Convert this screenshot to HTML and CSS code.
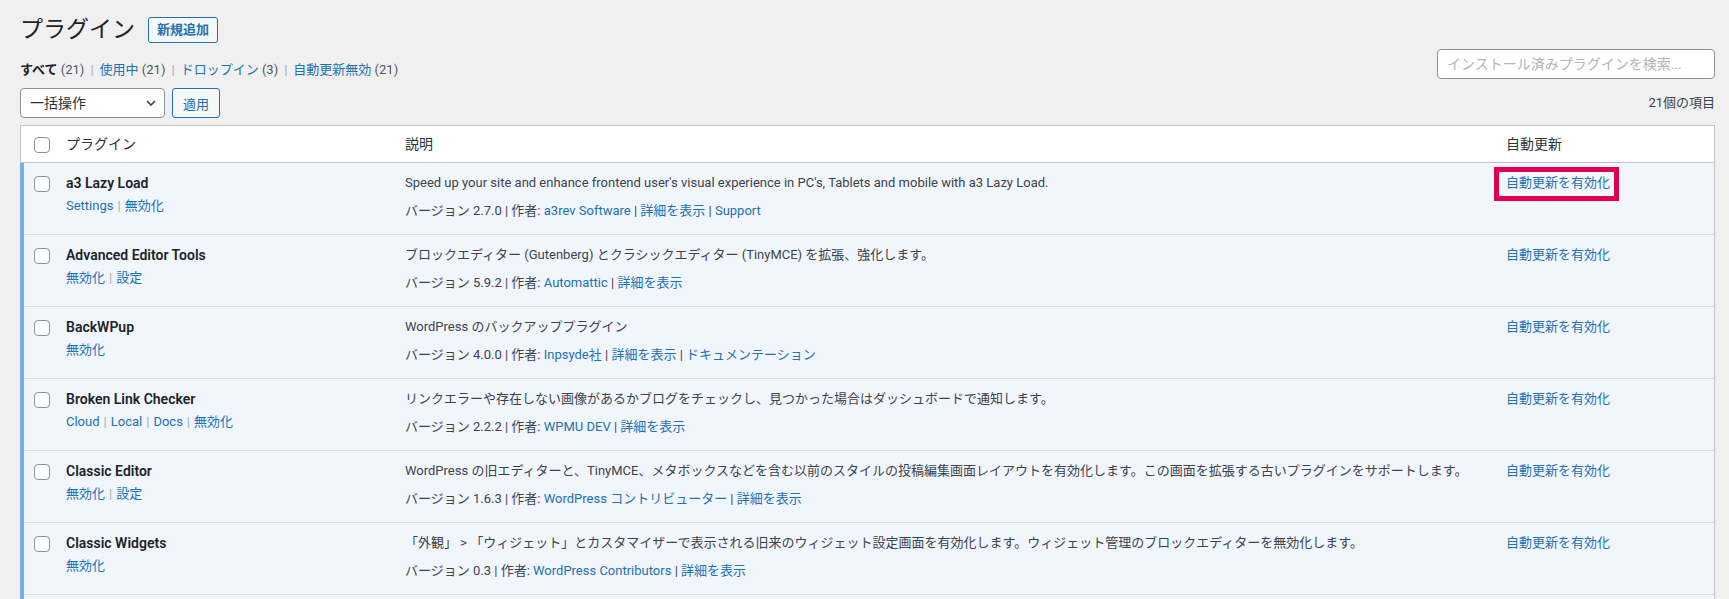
FILE: index.html
```html
<!DOCTYPE html>
<html lang="ja">
<head>
<meta charset="utf-8">
<title>プラグイン</title>
<link rel="stylesheet" href="styles.css">
</head>
<body>
<div class="wrap">
  <div class="title-row">
    <h1>プラグイン</h1>
    <a class="btn-add" href="#">新規追加</a>
  </div>

  <div class="filter-row">
    <ul class="subsubsub">
      <li><span class="current">すべて</span> <span class="count">(21)</span><span class="sep">|</span></li>
      <li><a href="#">使用中</a> <span class="count">(21)</span><span class="sep">|</span></li>
      <li><a href="#">ドロップイン</a> <span class="count">(3)</span><span class="sep">|</span></li>
      <li><a href="#">自動更新無効</a> <span class="count">(21)</span></li>
    </ul>
    <input class="search" type="search" placeholder="インストール済みプラグインを検索...">
  </div>

  <div class="tablenav">
    <div class="bulk">
      <div class="select">
        <span>一括操作</span>
        <svg class="chev" width="10" height="6" viewBox="0 0 10 6"><path d="M1 1l4 4 4-4" fill="none" stroke="#3c434a" stroke-width="1.6"/></svg>
      </div>
      <button class="btn">適用</button>
    </div>
    <div class="items">21個の項目</div>
  </div>

  <table class="plugins">
    <colgroup>
      <col class="c-check"><col class="c-name"><col class="c-desc"><col class="c-auto">
    </colgroup>
    <thead>
      <tr>
        <th class="check"><span class="cb"></span></th>
        <th>プラグイン</th>
        <th>説明</th>
        <th>自動更新</th>
      </tr>
    </thead>
    <tbody>
      <tr class="active">
        <td class="check"><span class="cb"></span></td>
        <td class="name"><strong>a3 Lazy Load</strong>
          <div class="actions"><a href="#">Settings</a><span class="sep">|</span><a href="#">無効化</a></div></td>
        <td class="desc"><p>Speed up your site and enhance frontend user's visual experience in PC's, Tablets and mobile with a3 Lazy Load.</p>
          <div class="meta">バージョン 2.7.0 | 作者: <a href="#">a3rev Software</a> | <a href="#">詳細を表示</a> | <a href="#">Support</a></div></td>
        <td class="auto"><a href="#" class="hl">自動更新を有効化</a></td>
      </tr>
      <tr class="active">
        <td class="check"><span class="cb"></span></td>
        <td class="name"><strong>Advanced Editor Tools</strong>
          <div class="actions"><a href="#">無効化</a><span class="sep">|</span><a href="#">設定</a></div></td>
        <td class="desc"><p>ブロックエディター (Gutenberg) とクラシックエディター (TinyMCE) を拡張、強化します。</p>
          <div class="meta">バージョン 5.9.2 | 作者: <a href="#">Automattic</a> | <a href="#">詳細を表示</a></div></td>
        <td class="auto"><a href="#">自動更新を有効化</a></td>
      </tr>
      <tr class="active">
        <td class="check"><span class="cb"></span></td>
        <td class="name"><strong>BackWPup</strong>
          <div class="actions"><a href="#">無効化</a></div></td>
        <td class="desc"><p>WordPress のバックアッププラグイン</p>
          <div class="meta">バージョン 4.0.0 | 作者: <a href="#">Inpsyde社</a> | <a href="#">詳細を表示</a> | <a href="#">ドキュメンテーション</a></div></td>
        <td class="auto"><a href="#">自動更新を有効化</a></td>
      </tr>
      <tr class="active">
        <td class="check"><span class="cb"></span></td>
        <td class="name"><strong>Broken Link Checker</strong>
          <div class="actions"><a href="#">Cloud</a><span class="sep">|</span><a href="#">Local</a><span class="sep">|</span><a href="#">Docs</a><span class="sep">|</span><a href="#">無効化</a></div></td>
        <td class="desc"><p>リンクエラーや存在しない画像があるかブログをチェックし、見つかった場合はダッシュボードで通知します。</p>
          <div class="meta">バージョン 2.2.2 | 作者: <a href="#">WPMU DEV</a> | <a href="#">詳細を表示</a></div></td>
        <td class="auto"><a href="#">自動更新を有効化</a></td>
      </tr>
      <tr class="active">
        <td class="check"><span class="cb"></span></td>
        <td class="name"><strong>Classic Editor</strong>
          <div class="actions"><a href="#">無効化</a><span class="sep">|</span><a href="#">設定</a></div></td>
        <td class="desc"><p>WordPress の旧エディターと、TinyMCE、メタボックスなどを含む以前のスタイルの投稿編集画面レイアウトを有効化します。この画面を拡張する古いプラグインをサポートします。</p>
          <div class="meta">バージョン 1.6.3 | 作者: <a href="#">WordPress コントリビューター</a> | <a href="#">詳細を表示</a></div></td>
        <td class="auto"><a href="#">自動更新を有効化</a></td>
      </tr>
      <tr class="active">
        <td class="check"><span class="cb"></span></td>
        <td class="name"><strong>Classic Widgets</strong>
          <div class="actions"><a href="#">無効化</a></div></td>
        <td class="desc"><p>「外観」 &gt; 「ウィジェット」とカスタマイザーで表示される旧来のウィジェット設定画面を有効化します。ウィジェット管理のブロックエディターを無効化します。</p>
          <div class="meta">バージョン 0.3 | 作者: <a href="#">WordPress Contributors</a> | <a href="#">詳細を表示</a></div></td>
        <td class="auto"><a href="#">自動更新を有効化</a></td>
      </tr>
      <tr class="active">
        <td class="check"></td>
        <td class="name"></td>
        <td class="desc"></td>
        <td class="auto"></td>
      </tr>
    </tbody>
  </table>
</div>
</body>
</html>
```

FILE: styles.css
```css
html { overflow: hidden; }
body {
  margin: 0;
  background: #f0f0f1;
  color: #3c434a;
  font-family: "Segoe UI", Roboto, "Noto Sans CJK JP", sans-serif;
  font-size: 13px;
  line-height: 20px;
}
a { color: #2271b1; text-decoration: none; }

.wrap { padding: 0 14px 0 20px; }

.title-row {
  display: flex;
  align-items: center;
  gap: 13px;
  margin-top: 17px;
  height: 26px;
}
.title-row h1 {
  margin: 0;
  font-size: 23px;
  font-weight: 400;
  line-height: 26px;
  color: #1d2327;
}
.btn-add {
  display: inline-block;
  box-sizing: border-box;
  height: 26px;
  padding: 0 8px;
  border: 1px solid #2271b1;
  border-radius: 3px;
  background: #f6f7f7;
  color: #2271b1;
  font-size: 13px;
  font-weight: 600;
  line-height: 24px;
}

.filter-row {
  display: flex;
  justify-content: space-between;
  align-items: flex-start;
  margin-top: 6px;
  height: 30px;
}
.subsubsub {
  list-style: none;
  margin: 11px 0 0 0;
  padding: 0;
  display: flex;
  color: #50575e;
}
.subsubsub li { white-space: nowrap; }
.subsubsub .current { font-weight: 600; color: #1d2327; }
.subsubsub .count { color: #50575e; }
.subsubsub .sep { color: #a7aaad; margin: 0 6px; }

.search {
  box-sizing: border-box;
  width: 278px;
  height: 30px;
  margin: 0;
  padding: 0 9px;
  border: 1px solid #8c8f94;
  border-radius: 4px;
  background: #fff;
  font-family: inherit;
  font-size: 14px;
  color: #2c3338;
}
.search::placeholder { color: #b1b5b9; }

.tablenav {
  display: flex;
  justify-content: space-between;
  align-items: center;
  margin-top: 9px;
  height: 30px;
}
.bulk { display: flex; gap: 7px; }
.select {
  box-sizing: border-box;
  width: 145px;
  height: 30px;
  display: flex;
  align-items: center;
  justify-content: space-between;
  padding: 0 8px 0 9px;
  border: 1px solid #8c8f94;
  border-radius: 4px;
  background: #fff;
  color: #2c3338;
  font-size: 14px;
}
.btn {
  box-sizing: border-box;
  height: 30px;
  padding: 0 10px;
  border: 1px solid #2271b1;
  border-radius: 3px;
  background: #f6f7f7;
  color: #2271b1;
  font-family: inherit;
  font-size: 13px;
}
.items { color: #3c434a; }

.plugins {
  width: 100%;
  margin-top: 7px;
  border-collapse: separate;
  border-spacing: 0;
  table-layout: fixed;
  background: #fff;
  border-top: 1px solid #c3c4c7;
  border-right: 1px solid #c3c4c7;
  border-bottom: 1px solid #c3c4c7;
}
.c-check { width: 46px; }
.c-name { width: 339px; }
.c-auto { width: 208px; }

.plugins th {
  text-align: left;
  font-weight: 400;
  font-size: 14px;
  color: #2c3338;
  height: 36px;
  padding: 0;
  border-bottom: 1px solid #c3c4c7;
  vertical-align: middle;
}
.plugins th.check { box-shadow: inset 1px 0 0 #c3c4c7; }

.cb {
  display: block;
  box-sizing: border-box;
  width: 16px;
  height: 16px;
  margin-left: 14px;
  border: 1px solid #8c8f94;
  border-radius: 4px;
  background: #fff;
}
.plugins th .cb { margin-top: 1px; }

.plugins td {
  vertical-align: top;
  height: 72px;
  box-sizing: border-box;
  padding: 10px 0 0 0;
  background: #f0f6fc;
  box-shadow: inset 0 -1px 0 rgba(0, 0, 0, 0.1);
}
.plugins td.check { box-shadow: inset 4px 0 0 #72aee6, inset 0 -1px 0 rgba(0, 0, 0, 0.1); }
.plugins td.check .cb { margin-top: 3px; }

.name strong {
  display: block;
  font-size: 14px;
  font-weight: 600;
  color: #1d2327;
  line-height: 20px;
}
.actions { padding-top: 3px; line-height: 20px; }
.actions .sep { color: #a7aaad; margin: 0 4px; }

.desc p { margin: 0 0 8px; color: #3c434a; }
.meta { color: #3c434a; }

.auto a { display: inline-block; }
.hl { position: relative; }
.hl::after {
  content: "";
  position: absolute;
  top: -6px;
  bottom: -8px;
  left: -12px;
  right: -9px;
  border: 5px solid #e1004f;
}
```
